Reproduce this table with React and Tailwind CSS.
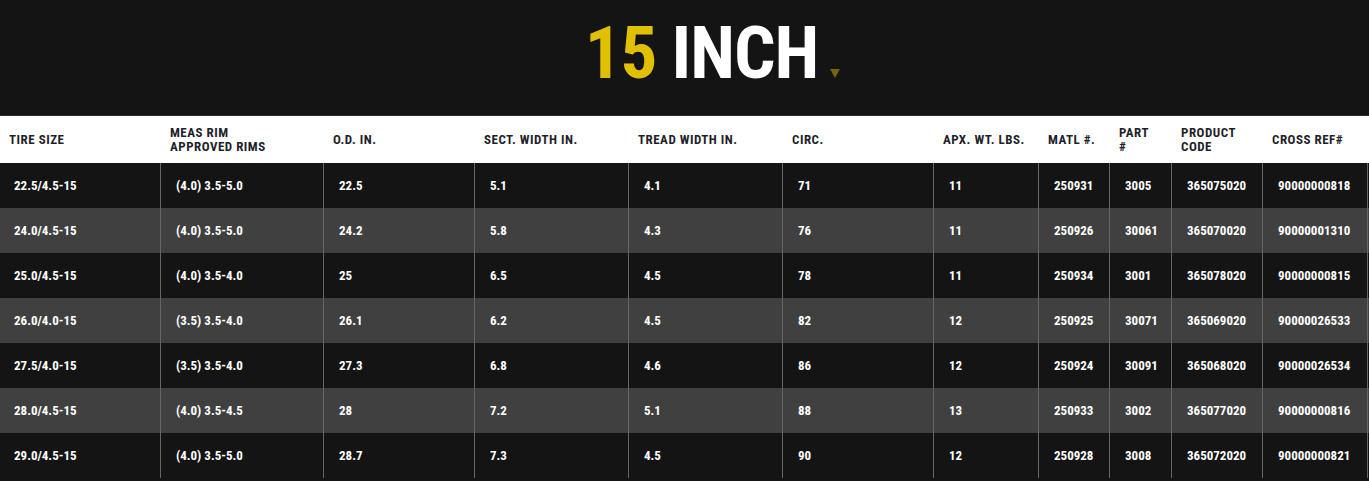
const headers = [
  ['TIRE SIZE'],
  ['MEAS RIM', 'APPROVED RIMS'],
  ['O.D. IN.'],
  ['SECT. WIDTH IN.'],
  ['TREAD WIDTH IN.'],
  ['CIRC.'],
  ['APX. WT. LBS.'],
  ['MATL #.'],
  ['PART', '#'],
  ['PRODUCT', 'CODE'],
  ['CROSS REF#'],
];

const rows = [
  ['22.5/4.5-15', '(4.0) 3.5-5.0', '22.5', '5.1', '4.1', '71', '11', '250931', '3005', '365075020', '90000000818'],
  ['24.0/4.5-15', '(4.0) 3.5-5.0', '24.2', '5.8', '4.3', '76', '11', '250926', '30061', '365070020', '90000001310'],
  ['25.0/4.5-15', '(4.0) 3.5-4.0', '25', '6.5', '4.5', '78', '11', '250934', '3001', '365078020', '90000000815'],
  ['26.0/4.0-15', '(3.5) 3.5-4.0', '26.1', '6.2', '4.5', '82', '12', '250925', '30071', '365069020', '90000026533'],
  ['27.5/4.0-15', '(3.5) 3.5-4.0', '27.3', '6.8', '4.6', '86', '12', '250924', '30091', '365068020', '90000026534'],
  ['28.0/4.5-15', '(4.0) 3.5-4.5', '28', '7.2', '5.1', '88', '13', '250933', '3002', '365077020', '90000000816'],
  ['29.0/4.5-15', '(4.0) 3.5-5.0', '28.7', '7.3', '4.5', '90', '12', '250928', '3008', '365072020', '90000000821'],
];

const grid = 'grid grid-cols-[160px_163px_151px_154px_154px_151px_105px_71px_62px_91px_105px_1fr]';

export default function App() {
  return (
    <div className="w-[1369px] h-[481px] bg-[#141414] overflow-hidden font-['Roboto_Condensed','Roboto',sans-serif] font-stretch-condensed">
      {/* Title */}
      <div className="h-[115px] pt-[17px] flex justify-center">
        <h1 className="flex items-baseline self-start text-[73px] leading-none font-bold tracking-[-1px] ml-[56px]">
          <span className="text-[#e0c000]">15</span>
          <span className="text-white ml-[15px]">INCH</span>
          <svg width="10" height="9" viewBox="0 0 10 9" className="ml-[12px] mb-[2px]">
            <path d="M0 0H10L5 9Z" fill="#75660a" />
          </svg>
        </h1>
      </div>

      {/* Header row */}
      <div className={`${grid} h-[48px] bg-white border-t border-[#2b2b2b] text-[#1f1f2b] text-[13px] leading-[14px] font-bold tracking-[0.5px]`}>
        {headers.map((h, i) => (
          <div key={i} className={`flex flex-col justify-center ${i === 0 ? 'pl-[9px]' : 'pl-[10px]'}`}>
            {h.map((line) => <span key={line}>{line}</span>)}
          </div>
        ))}
        <div />
      </div>

      {/* Data rows */}
      {rows.map((r, ri) => (
        <div key={ri} className={`${grid} h-[45px] text-white text-[13px] font-bold ${ri % 2 ? 'bg-[#404040]' : 'bg-[#141414]'}`}>
          {r.map((c, ci) => (
            <div
              key={ci}
              className={`flex items-center ${ci === 0 ? 'pl-[14px]' : 'border-l border-[#666666] pl-[15px]'}`}
            >
              {c}
            </div>
          ))}
          <div className="border-l border-[#666666]" />
        </div>
      ))}
    </div>
  );
}
